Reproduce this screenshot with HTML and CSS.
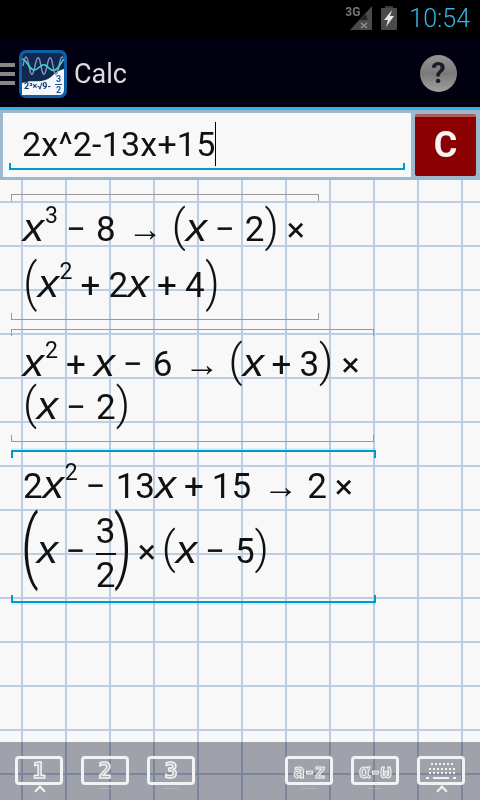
FILE: index.html
```html
<!DOCTYPE html>
<html lang="en">
<head>
    <meta charset="UTF-8">
    <meta name="viewport" content="width=device-width, initial-scale=1.0">
    <title>Calc</title>
    <link rel="stylesheet" href="styles.css">
</head>
<body>

<div class="status-bar">
    <span class="net-label">3G</span>
    <svg class="signal" width="22" height="24" viewBox="0 0 22 24">
        <path d="M0 24 L22 0 V24 Z" fill="#4a4a4a"/>
        <path d="M9 14 L15 7 L18 14 Z" fill="#262626"/>
        <path d="M11 17 L17 22 M17 17 L11 22" stroke="#909090" stroke-width="1.5"/>
    </svg>
    <svg class="battery" width="16" height="24" viewBox="0 0 16 24">
        <rect x="4" y="0" width="8" height="3" fill="#3a3a3a"/>
        <rect x="0" y="2" width="16" height="22" rx="1" fill="#4a4a4a"/>
        <path d="M11 4 L3 14 H7 L5 21 L13 10 H9 Z" fill="#e6e6e6"/>
    </svg>
    <span class="clock">10:54</span>
</div>

<div class="action-bar">
    <div class="drawer-icon"><i></i><i></i><i></i></div>
    <svg class="app-logo" width="48" height="48" viewBox="0 0 48 48">
        <rect width="48" height="48" rx="7" fill="#0f5fa8"/>
        <rect x="3" y="3" width="42" height="42" rx="5" fill="#10294f"/>
        <path d="M3 45 V33 C14 29 24 34 32 27 C37 22 41 20 45 19 V40 Q45 45 40 45 Z" fill="#f4f7fb"/>
        <path d="M4 16 C6 4 8 4 10 16 S14 26 16 16 S20 4 22 16 S26 26 28 16 S32 4 34 16 S38 26 40 16 S43 6 44 8" fill="none" stroke="#8d8fd0" stroke-width="1.4"/>
        <path d="M3 9 C8 9 10 20 15 20 S22 13 26 15 S32 22 36 20 S42 12 45 9" fill="none" stroke="#3fd8c4" stroke-width="1.6"/>
        <text class="logo-text" x="5" y="39">2³×√9-</text>
        <text class="logo-frac" x="37" y="32">3</text>
        <rect x="36" y="34" width="7" height="1" fill="#1c5aa0"/>
        <text class="logo-frac" x="37" y="43">2</text>
    </svg>
    <span class="app-title">Calc</span>
    <div class="help-btn">?</div>
</div>

<div class="input-panel">
    <div class="input-box">
        <div class="input-text">2x^2-13x+15<span class="cursor"></span></div>
    </div>
    <div class="clear-btn">C</div>
</div>

<div class="worksheet">
    <div class="card card-a">
        <div class="row row-a"><i>x</i><sup>3</sup><span class="op">−</span>8<span class="arrow">→</span><span class="par">(</span><i>x</i><span class="op">−</span>2<span class="par">)</span><span class="times">×</span></div>
        <div class="row row-b"><span class="par par-mid">(</span><i>x</i><sup>2</sup><span class="plus">+</span>2<i>x</i><span class="plus">+</span>4<span class="par par-mid">)</span></div>
    </div>
    <div class="card card-b">
        <div class="row row-a"><i>x</i><sup>2</sup><span class="plus">+</span><i>x</i><span class="op">−</span>6<span class="arrow">→</span><span class="par">(</span><i>x</i><span class="plus">+</span>3<span class="par">)</span><span class="times">×</span></div>
        <div class="row row-c"><span class="par">(</span><i>x</i><span class="op">−</span>2<span class="par">)</span></div>
    </div>
    <div class="card card-c selected">
        <div class="row row-d">2<i>x</i><sup>2</sup><span class="op">−</span>13<i>x</i><span class="plus">+</span>15<span class="arrow">→</span>2<span class="times">×</span></div>
        <div class="row row-e"><span class="par par-big">(</span><i>x</i><span class="op">−</span><span class="frac"><span>3</span><span class="frac-bottom">2</span></span><span class="par par-big">)</span><span class="times">×</span><span class="par par-after">(</span><i>x</i><span class="op">−</span>5<span class="par">)</span></div>
    </div>

    <div class="key-bar">
        <div class="key-group">
            <div class="key active-key">1</div>
            <div class="key hint-key">2</div>
            <div class="key hint-key">3</div>
        </div>
        <div class="key-group">
            <div class="key key-small hint-key">a-z</div>
            <div class="key key-small hint-key">α-ω</div>
            <div class="key active-key">
                <svg width="40" height="22" viewBox="0 0 40 22">
                    <g fill="#f2f2f2">
                        <rect x="10" y="3" width="2" height="2"/><rect x="14" y="3" width="2" height="2"/><rect x="18" y="3" width="2" height="2"/><rect x="22" y="3" width="2" height="2"/><rect x="26" y="3" width="2" height="2"/><rect x="30" y="3" width="2" height="2"/>
                        <rect x="8" y="8" width="2" height="2"/><rect x="12" y="8" width="2" height="2"/><rect x="16" y="8" width="2" height="2"/><rect x="20" y="8" width="2" height="2"/><rect x="24" y="8" width="2" height="2"/><rect x="28" y="8" width="2" height="2"/><rect x="32" y="8" width="2" height="2"/>
                        <rect x="8" y="12" width="2" height="2"/><rect x="12" y="12" width="2" height="2"/><rect x="16" y="12" width="2" height="2"/><rect x="20" y="12" width="2" height="2"/><rect x="24" y="12" width="2" height="2"/><rect x="28" y="12" width="2" height="2"/><rect x="32" y="12" width="2" height="2"/>
                        <rect x="5" y="17" width="3" height="2"/><rect x="12" y="17" width="16" height="2"/><rect x="32" y="17" width="3" height="2"/>
                    </g>
                </svg>
            </div>
        </div>
    </div>
</div>

</body>
</html>
```

FILE: styles.css
```css
/* Global Styles */
body {
    margin: 0;
    width: 480px;
    height: 800px;
    display: flex;
    flex-direction: column;
    overflow: hidden;
    font-family: Roboto, sans-serif;
    background-color: #000;
}

/* Status bar */
.status-bar {
    height: 38px;
    display: flex;
    align-items: flex-start;
    justify-content: flex-end;
    background-color: #000;
    color: #33b5e5;
    padding-right: 10px;
    flex-shrink: 0;
}

.net-label {
    font-size: 12px;
    font-weight: 700;
    color: #777;
    margin: 5px -8px 0 0;
    width: 13px;
    white-space: nowrap;
}

.signal {
    margin: 6px 9px 0 0;
}

.battery {
    margin: 6px 12px 0 0;
}

.clock {
    font-size: 25px;
    font-weight: 300;
    line-height: 38px;
}

/* Action bar */
.action-bar {
    height: 67px;
    padding-top: 2px;
    display: flex;
    align-items: center;
    background-color: #000010;
    border-bottom: 3px solid #33b5e5;
    flex-shrink: 0;
}

.drawer-icon {
    width: 15px;
    display: flex;
    flex-direction: column;
    gap: 5px;
    margin-right: 4px;
}

.drawer-icon i {
    height: 4px;
    background-color: #888;
}

.logo-text {
    font: 700 9px Roboto, sans-serif;
    fill: #123a6a;
}

.logo-frac {
    font: 700 9px Roboto, sans-serif;
    fill: #1c5aa0;
}

.app-title {
    font-size: 27px;
    color: #dcdcdc;
    margin-left: 7px;
}

.help-btn {
    width: 37px;
    height: 37px;
    border-radius: 50%;
    margin-left: auto;
    margin-right: 23px;
    background: linear-gradient(#959595, #7a7a7a 50%, #a0a0a0);
    color: #1c1c28;
    font-size: 29px;
    font-weight: 700;
    line-height: 37px;
    text-align: center;
}

/* Input panel */
.input-panel {
    height: 70px;
    box-sizing: border-box;
    display: flex;
    gap: 4px;
    padding: 3px 4px 3px 3px;
    background-color: #9cb7d0;
    flex-shrink: 0;
}

.input-box {
    width: 408px;
    height: 64px;
    box-sizing: border-box;
    background-color: #f8f8f8;
    padding: 9px 6px 0;
}

.input-text {
    height: 48px;
    box-sizing: border-box;
    padding-left: 13px;
    border-bottom: 2px solid #0099cc;
    font-size: 34px;
    letter-spacing: 0.2px;
    line-height: 44px;
    color: #111;
    background: linear-gradient(#0099cc, #0099cc) left bottom / 2px 5px no-repeat,
                linear-gradient(#0099cc, #0099cc) right bottom / 2px 5px no-repeat;
}

.cursor {
    display: inline-block;
    width: 1px;
    height: 44px;
    background-color: #000;
    vertical-align: top;
}

.clear-btn {
    width: 61px;
    height: 62px;
    margin-top: 1px;
    border-top: 3px solid #b05a5a;
    box-sizing: border-box;
    border-radius: 2px;
    background-color: #8b0000;
    color: #f4f4f4;
    font-size: 36px;
    font-weight: 700;
    line-height: 57px;
    text-align: center;
}

/* Worksheet */
.worksheet {
    flex: 1;
    display: flex;
    flex-direction: column;
    padding: 14px 0 0 11px;
    background-color: #f8f8f8;
    background-image: linear-gradient(to right, #bccee1 2px, transparent 2px),
                      linear-gradient(to bottom, #bccee1 2px, transparent 2px);
    background-size: 44px 44px;
    background-position: 21px 21px;
}

.card {
    box-sizing: border-box;
    padding-left: 12px;
    margin-bottom: 9px;
    color: #111;
    border-top: 1px solid #999;
    border-bottom: 1px solid #999;
    background: linear-gradient(#999, #999) left top / 1px 6px no-repeat,
                linear-gradient(#999, #999) right top / 1px 6px no-repeat,
                linear-gradient(#999, #999) left bottom / 1px 6px no-repeat,
                linear-gradient(#999, #999) right bottom / 1px 6px no-repeat;
}

.card-a {
    width: 308px;
    height: 126px;
}

.card-b {
    width: 363px;
    height: 113px;
    margin-bottom: 8px;
}

.card-c {
    width: 365px;
    height: 153px;
}

.card.selected {
    border-color: #0099cc;
    border-width: 2px;
    box-shadow: 0 -2px 0 rgba(51, 181, 229, 0.15), 0 2px 0 rgba(51, 181, 229, 0.15);
    background: linear-gradient(#0099cc, #0099cc) left top / 2px 6px no-repeat,
                linear-gradient(#0099cc, #0099cc) right top / 2px 6px no-repeat,
                linear-gradient(#0099cc, #0099cc) left bottom / 2px 6px no-repeat,
                linear-gradient(#0099cc, #0099cc) right bottom / 2px 6px no-repeat;
}

.row {
    font-size: 35px;
    white-space: nowrap;
}

/* the variable x sits wider than it is tall in the reference */
.row i {
    display: inline-block;
    font-family: "Liberation Sans", sans-serif;
    font-size: 38px;
    margin: 0 1px;
    transform: scaleX(1.12);
}

.row sup {
    font-size: 23px;
    line-height: 0;
    vertical-align: 18px;
    margin-left: 1px;
}

.row-a {
    height: 47px;
    line-height: 66px;
}

.row-b {
    height: 60px;
    line-height: 64px;
    margin-top: 10px;
}

.row-c {
    height: 47px;
    line-height: 58px;
}

.row-d {
    height: 56px;
    line-height: 66px;
}

.row-e {
    height: 88px;
    line-height: 84px;
}

.op {
    margin: 0 10px 0 8px;
}

.plus {
    margin: 0 8px;
}

.arrow {
    font-family: "Liberation Sans", sans-serif;
    font-size: 35px;
    margin: 0 9px 0 12px;
}

.times {
    font-size: 34px;
    margin-left: 8px;
}

.par {
    font-size: 44px;
    font-weight: 300;
    line-height: 0;
}

.par-mid {
    display: inline-block;
    font-size: 52px;
    margin: 0 -1px;
    transform: translateY(3px) scaleX(0.85);
}

/* the tall brackets round a fraction: squeezed so the stroke stays thin */
.par-big {
    display: inline-block;
    font-size: 80px;
    margin: 0 -6px;
    transform: translateY(10px) scaleX(0.7);
}

.par-after {
    margin-left: 6px;
}

.frac {
    display: inline-flex;
    flex-direction: column;
    vertical-align: middle;
    line-height: 42px;
    text-align: center;
    width: 20px;
}

.frac-bottom {
    border-top: 2px solid #111;
}

/* Bottom keys */
.key-bar {
    position: relative;
    margin: auto 0 0 -11px;
    height: 58px;
    display: flex;
    justify-content: space-between;
    padding: 14px 15px 0;
    box-sizing: border-box;
}

.key-bar::before {
    content: "";
    position: absolute;
    inset: 0;
    background-color: #a4a6b0;
    mix-blend-mode: multiply;
}

.key-group {
    position: relative;
    display: flex;
    gap: 18px;
}

.key {
    position: relative;
    width: 48px;
    height: 29px;
    box-sizing: border-box;
    border: 3px solid #f2f2f2;
    border-radius: 4px;
    display: flex;
    align-items: center;
    justify-content: center;
    font-family: "DejaVu Sans Mono", monospace;
    font-size: 22px;
    font-weight: 700;
    color: #b0b2ba;
    -webkit-text-stroke: 1.5px #f2f2f2;
}

.key-small {
    font-size: 19px;
    letter-spacing: -1px;
    -webkit-text-stroke: 1px #f2f2f2;
}

.active-key::after {
    content: "";
    position: absolute;
    left: 18px;
    bottom: -13px;
    width: 6px;
    height: 6px;
    border-top: 2px solid #f2f2f2;
    border-left: 2px solid #f2f2f2;
    transform: rotate(45deg);
}

.hint-key::after {
    content: "";
    position: absolute;
    left: 14px;
    bottom: -7px;
    width: 14px;
    height: 1px;
    background-color: rgba(255, 255, 255, 0.2);
}
```
